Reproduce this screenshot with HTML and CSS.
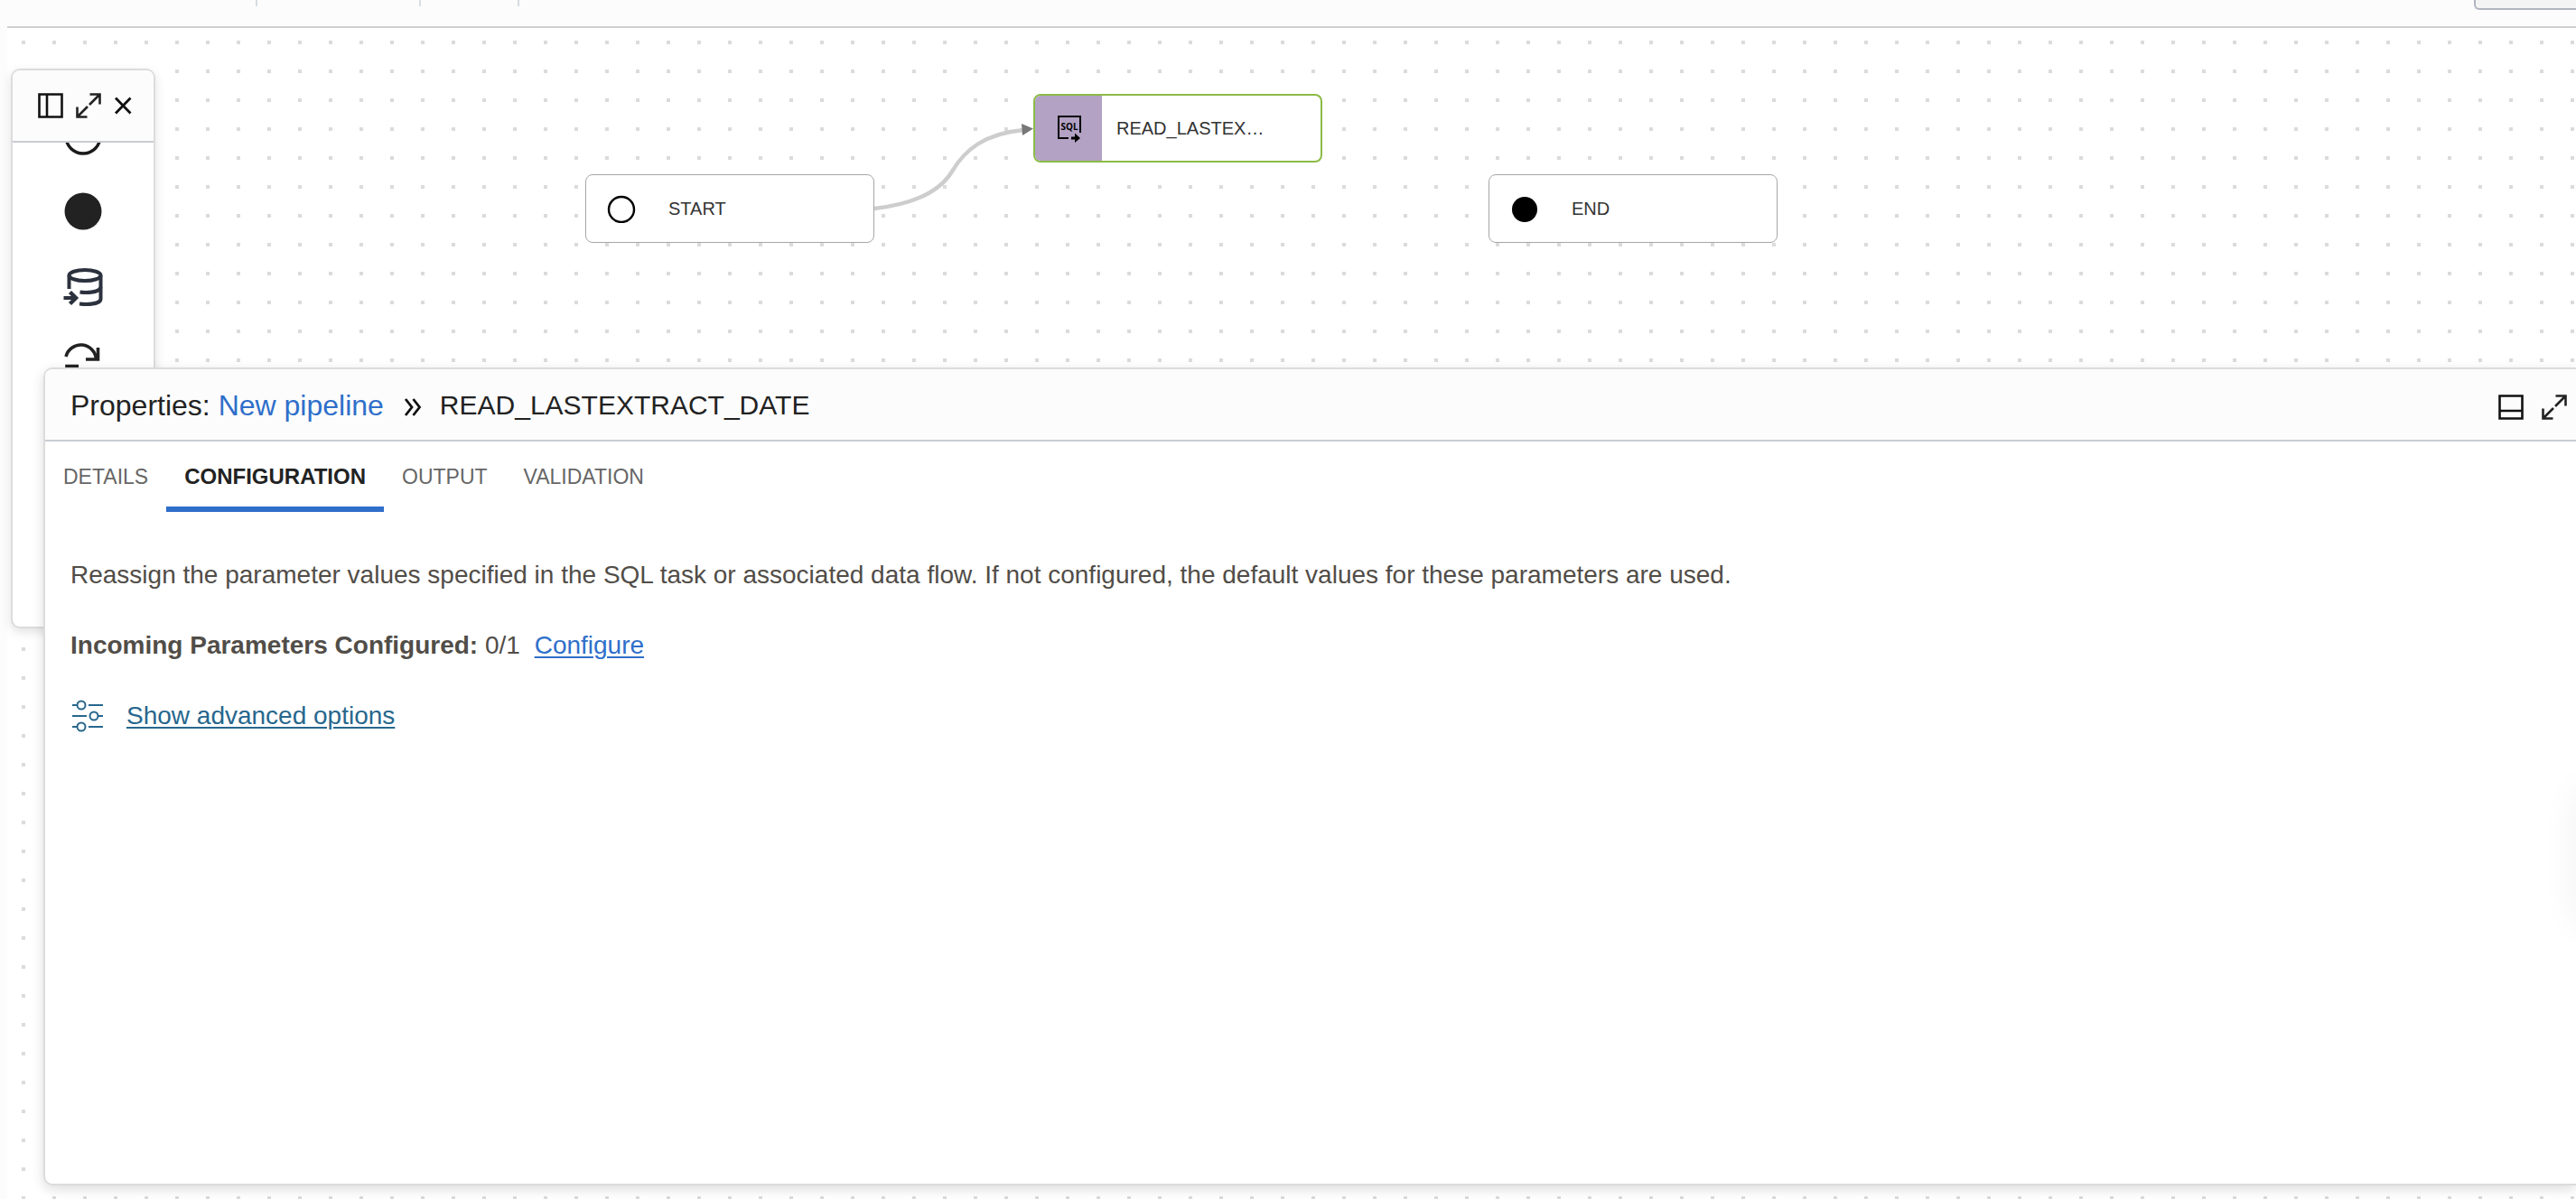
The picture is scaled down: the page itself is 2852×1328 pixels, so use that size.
FILE: index.html
```
<!DOCTYPE html>
<html lang="en">
<head>
    <meta charset="UTF-8" />
    <meta name="viewport" content="width=device-width, initial-scale=1.0" />
    <title>New pipeline</title>
    <link rel="stylesheet" href="styles.css">
</head>
<body>
    <header class="toolbar">
        <span class="divider divider-first"></span>
        <span class="divider divider-second"></span>
        <span class="divider"></span>
        <button class="toolbar-button" aria-label="Actions"></button>
    </header>

    <main class="canvas">
        <svg class="link" width="180" height="110" viewBox="0 0 180 110" aria-hidden="true">
            <path d="M0 97 C52 91 75 74 86 56 C100 32 122 14 165 10" fill="none" stroke="#cdcdcd" stroke-width="4.4" />
            <path d="M163 3 L176 8.500 L164 16 Z" fill="#777" />
        </svg>

        <div class="node node-start">
            <span class="node-icon">
                <svg width="32" height="32" viewBox="0 0 32 32"><circle cx="16" cy="17" r="14" fill="none" stroke="#000" stroke-width="2.4" /></svg>
            </span>
            <span class="node-label">START</span>
        </div>

        <div class="node node-sql">
            <span class="node-icon">
                <svg width="28" height="32" viewBox="0 0 28 32">
                    <path d="M14 27 H3 V3 H27 V21" fill="none" stroke="#000" stroke-width="2" />
                    <path d="M17 25.500 H21 V21.500 L27 27 L21 32 V28.500 H17 Z" fill="#000" />
                    <text x="15" y="18" class="sql-text">SQL</text>
                </svg>
            </span>
            <span class="node-label">READ_LASTEX…</span>
        </div>

        <div class="node node-end">
            <span class="node-icon">
                <svg width="32" height="32" viewBox="0 0 32 32"><circle cx="16" cy="17" r="14" fill="#000" /></svg>
            </span>
            <span class="node-label">END</span>
        </div>

        <aside class="palette">
            <div class="palette-header">
                <button class="icon-button" aria-label="Dock left">
                    <svg width="28" height="28" viewBox="0 0 28 28"><path d="M1.500 1.500 H26.500 V26.500 H1.500 Z M10 1.500 V26.500" fill="none" stroke="#111" stroke-width="2.600" /></svg>
                </button>
                <button class="icon-button" aria-label="Expand">
                    <svg width="28" height="28" viewBox="0 0 28 28"><path d="M15.500 1.500 H26.500 V12.500 M26 2 L15 13 M1.500 15.500 V26.500 H12.500 M2 26 L13 15" fill="none" stroke="#222" stroke-width="2.600" /></svg>
                </button>
                <button class="icon-button" aria-label="Close">
                    <svg width="20" height="20" viewBox="0 0 20 20"><path d="M2 1.500 L18.500 18.500 M18.500 1.500 L2 18.500" fill="none" stroke="#111" stroke-width="2.800" /></svg>
                </button>
            </div>
            <div class="palette-body">
                <svg class="palette-item" width="44" height="44" viewBox="0 0 44 44"><circle cx="22" cy="23" r="19" fill="none" stroke="#1a1a1a" stroke-width="3.400" /></svg>
                <svg class="palette-item" width="44" height="44" viewBox="0 0 44 44"><circle cx="22" cy="22" r="20.500" fill="#222" /></svg>
                <svg class="palette-item" width="44" height="44" viewBox="0 0 44 44">
                    <g fill="none" stroke="#2b313d" stroke-width="4">
                        <ellipse cx="24" cy="9" rx="17.500" ry="6" />
                        <path d="M6.500 9 V24" />
                        <path d="M41.500 9 V35 C41.500 39 34 41 25 41 C22.500 41 20.500 40.800 18 40.500" />
                        <path d="M41.500 22 C41 26 34 28 25 28 C22.500 28 20.500 27.800 18.500 27.500" />
                        <path d="M0.500 34 H14" />
                        <path d="M7.500 27.500 L14 34 L7.500 40.500" stroke-width="4.400" />
                    </g>
                </svg>
                <svg class="palette-item" width="44" height="44" viewBox="0 0 44 44">
                    <g fill="none" stroke="#222" stroke-width="3.600">
                        <path d="M3 15 A17 17 0 0 1 36.500 18" />
                        <path d="M38.500 5 V18 H25" />
                        <path d="M41 29.500 A17 17 0 0 1 7.500 28" />
                        <path d="M4 40 V25.500 H17" />
                    </g>
                </svg>
            </div>
        </aside>

        <section class="properties">
            <div class="properties-header">
                <h2 class="properties-title">Properties: <a href="#">New pipeline</a></h2>
                <svg class="chevrons" width="20" height="20" viewBox="0 0 20 20"><path d="M2 1 L9 10 L2 19 M10.500 1 L17.500 10 L10.500 19" fill="none" stroke="#111" stroke-width="2.800" /></svg>
                <span class="properties-name">READ_LASTEXTRACT_DATE</span>
                <div class="properties-actions">
                    <button class="icon-button" aria-label="Dock bottom">
                        <svg width="28" height="28" viewBox="0 0 28 28"><path d="M1.500 1.500 H26.500 V26.500 H1.500 Z M1.500 18 H26.500" fill="none" stroke="#111" stroke-width="2.600" /></svg>
                    </button>
                    <button class="icon-button" aria-label="Expand properties">
                        <svg width="28" height="28" viewBox="0 0 28 28"><path d="M15.500 1.500 H26.500 V12.500 M26 2 L15 13 M1.500 15.500 V26.500 H12.500 M2 26 L13 15" fill="none" stroke="#222" stroke-width="2.600" /></svg>
                    </button>
                </div>
            </div>

            <nav class="tabs">
                <button class="tab">DETAILS</button>
                <button class="tab active">CONFIGURATION</button>
                <button class="tab">OUTPUT</button>
                <button class="tab">VALIDATION</button>
            </nav>

            <div class="properties-content">
                <p>Reassign the parameter values specified in the SQL task or associated data flow. If not configured, the default values for these parameters are used.</p>
                <p><strong>Incoming Parameters Configured:</strong> 0/1 <a class="configure" href="#">Configure</a></p>
                <p class="advanced">
                    <svg width="36" height="36" viewBox="0 0 36 36">
                        <g fill="none" stroke="#27678d" stroke-width="2">
                            <path d="M2 6 H7 M20 6 H36 M2 18 H18 M31 18 H36 M2 30 H7 M20 30 H36" />
                            <circle cx="12" cy="6" r="4.500" />
                            <circle cx="26" cy="18" r="4.500" />
                            <circle cx="12" cy="30" r="4.500" />
                        </g>
                    </svg>
                    <a href="#">Show advanced options</a>
                </p>
            </div>
        </section>

        <div class="side-drawer"></div>
    </main>
</body>
</html>
```
FILE: styles.css
```
* {
    box-sizing: border-box;
}

body {
    font-family: "Liberation Sans", Arial, sans-serif;
    background-color: #fcfcfc;
    color: #222;
    display: flex;
    flex-direction: column;
    height: 100vh;
    margin: 0;
    padding-left: 8px;
    overflow: hidden;
}

button {
    background: none;
    border: none;
    padding: 0;
    font-family: inherit;
    cursor: pointer;
}

svg {
    display: block;
}

/* Toolbar */
.toolbar {
    display: flex;
    align-items: flex-start;
    height: 31px;
    padding-left: 275px;
    border-bottom: 2px solid #cecfcf;
}

.divider {
    width: 2px;
    height: 7px;
    background-color: #d5dde4;
}

.divider-first {
    margin-right: 179px;
}

.divider-second {
    margin-right: 107px;
}

.toolbar-button {
    width: 113px;
    height: 11px;
    margin-left: auto;
    background-color: #f4f4f4;
    border: 2px solid #b0b5bf;
    border-top: none;
    border-right: none;
    border-bottom-left-radius: 6px;
}

/* Canvas with dotted grid */
.canvas {
    position: relative;
    flex: 1;
    background-color: #fff;
    background-image: conic-gradient(from 270deg at 4px 4px, #dbdbdb 90deg, transparent 0);
    background-size: 34px 32px;
    background-position: 16px 14px;
}

.link {
    position: absolute;
    left: 960px;
    top: 103px;
}

.node {
    position: absolute;
    display: flex;
    align-items: center;
    width: 320px;
    height: 76px;
    background-color: #fff;
    border: 1px solid #a6a6a6;
    border-radius: 8px;
    overflow: hidden;
}

.node-start {
    left: 640px;
    top: 162px;
}

.node-sql {
    left: 1136px;
    top: 73px;
    border: 2px solid #8cbb48;
}

.node-end {
    left: 1640px;
    top: 162px;
}

.node-icon {
    display: flex;
    align-items: center;
    justify-content: center;
    width: 78px;
    height: 100%;
}

.node-label {
    padding-left: 13px;
    font-size: 20px;
    line-height: 24px;
    color: #333;
}

.node-sql .node-icon {
    width: 74px;
    background-color: #b3a2c4;
}

.node-sql .node-label {
    padding-left: 16px;
}

.sql-text {
    font-family: "Open Sans", sans-serif;
    font-size: 10px;
    font-weight: bold;
    text-anchor: middle;
}

/* Floating palette */
.palette {
    position: absolute;
    left: 4px;
    top: 45px;
    width: 160px;
    height: 620px;
    background-color: #fff;
    border: 2px solid #dcdcdc;
    border-radius: 10px;
    box-shadow: 0 4px 12px rgba(0, 0, 0, 0.12);
    overflow: hidden;
}

.palette-header {
    display: flex;
    align-items: center;
    gap: 14px;
    height: 80px;
    padding-left: 28px;
    background-color: #fcfcfc;
    border-bottom: 2px solid #c9ccd3;
}

.palette-body {
    display: flex;
    flex-direction: column;
    align-items: center;
    gap: 40px;
    height: 536px;
    overflow: hidden;
}

.palette-item {
    flex-shrink: 0;
}

.palette-item:first-child {
    margin-top: -30px;
}

/* Properties panel */
.properties {
    position: absolute;
    left: 40px;
    right: 0;
    top: 376px;
    bottom: 15px;
    background-color: #fff;
    border: 2px solid #dcdcdc;
    border-right: none;
    border-radius: 10px 0 0 10px;
    box-shadow: 0 4px 14px rgba(0, 0, 0, 0.14);
}

.properties-header {
    display: flex;
    align-items: center;
    height: 80px;
    padding: 2px 10px 0 28px;
    background-color: #fcfcfc;
    border-bottom: 2px solid #c9ccd3;
    border-top-left-radius: 8px;
}

.properties-title {
    margin: 0;
    font-size: 32px;
    font-weight: normal;
    line-height: 40px;
}

.properties-title a {
    color: #2f6fca;
    text-decoration: none;
}

.chevrons {
    margin: 4px 20px 0 22px;
}

.properties-name {
    font-size: 30px;
    line-height: 40px;
}

.properties-actions {
    display: flex;
    gap: 20px;
    margin-top: 4px;
    margin-left: auto;
}

.tabs {
    display: flex;
}

.tab {
    height: 78px;
    padding: 6px 20px 0;
    border-bottom: 6px solid transparent;
    font-size: 23px;
    color: #666;
}

.tab.active {
    border-bottom-color: #2f6fca;
    font-size: 24px;
    font-weight: bold;
    color: #222;
}

.properties-content {
    padding: 50px 28px;
    font-size: 28px;
    line-height: 40px;
    color: #514d48;
}

.properties-content p {
    margin: 0 0 38px;
}

.properties-content a {
    text-underline-offset: 3px;
    text-decoration-thickness: 2px;
}

.configure {
    margin-left: 8px;
    color: #2f6fca;
}

.advanced {
    display: flex;
    align-items: center;
    gap: 26px;
}

.advanced a {
    color: #27678d;
}

/* Closed drawer, only its shadow shows at the window edge */
.side-drawer {
    position: absolute;
    right: -40px;
    top: 844px;
    width: 40px;
    height: 150px;
    border-radius: 10px;
    box-shadow: 0 0 40px rgba(0, 0, 0, 0.06);
}
```
